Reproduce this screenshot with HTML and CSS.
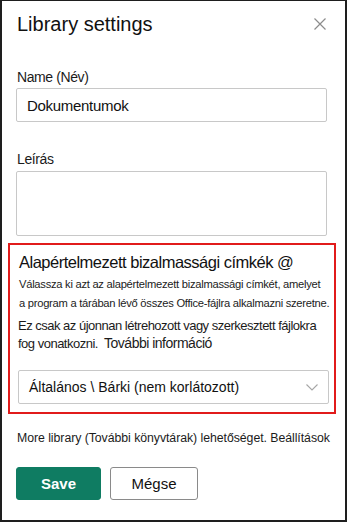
FILE: index.html
```html
<html>
  <head>
    <title>Library settings</title>
    <link rel="stylesheet" href="styles.css">
  </head>
  <body>
    <div class="panel">
      <div class="header">
        <h1>Library settings</h1>
        <button class="close" type="button" aria-label="Bezárás">
          <svg width="12" height="12" viewBox="0 0 12 12">
            <path d="M0.5 0.5 L11.5 11.5 M11.5 0.5 L0.5 11.5" stroke="#8c8c8c" stroke-width="1.2" fill="none" />
          </svg>
        </button>
      </div>

      <label class="field-label" for="name">Name (Név)</label>
      <input class="text-input" type="text" id="name" value="Dokumentumok" />

      <label class="field-label desc-label" for="desc">Leírás</label>
      <textarea class="text-area" id="desc"></textarea>

      <div class="highlight">
        <h2>Alapértelmezett bizalmassági címkék @</h2>
        <p class="small">Válassza ki azt az alapértelmezett bizalmassági címkét, amelyet<br>a program a tárában lévő összes Office-fájlra alkalmazni szeretne.</p>
        <p class="note">Ez csak az újonnan létrehozott vagy szerkesztett fájlokra<br>fog vonatkozni. <span class="more">További információ</span></p>
        <div class="dropdown">
          <span>Általános \ Bárki (nem korlátozott)</span>
          <svg width="12" height="7" viewBox="0 0 12 7">
            <path d="M0.5 0.5 L6 6 L11.5 0.5" stroke="#a6a6a6" stroke-width="1.1" fill="none" />
          </svg>
        </div>
      </div>

      <p class="footer-text">More library (További könyvtárak) lehetőséget. Beállítások</p>

      <div class="actions">
        <button class="btn primary" type="button">Save</button>
        <button class="btn" type="button">Mégse</button>
      </div>
    </div>
  </body>
</html>
```

FILE: styles.css
```css
html,
body {
  margin: 0;
  padding: 0;
  background: #fff;
}

body {
  font-family: "Liberation Sans", Arial, sans-serif;
  color: #1b1b1b;
}

.panel {
  box-sizing: border-box;
  width: 347px;
  height: 522px;
  border: 2px solid #1e1e1e;
  border-top-width: 1px;
  padding: 0 16px 0 14px;
  overflow: hidden;
}

.header {
  display: flex;
  justify-content: space-between;
  align-items: center;
  height: 24px;
  margin-top: 11px;
}

h1 {
  margin: 0 0 0 1px;
  font-size: 20px;
  line-height: 24px;
  font-weight: normal;
  color: #111;
}

.close {
  background: none;
  border: none;
  padding: 0;
  margin-right: 3px;
  width: 12px;
  height: 12px;
  display: flex;
}

.field-label {
  display: block;
  font-size: 14px;
  line-height: 18px;
  letter-spacing: -0.4px;
  margin: 32px 0 0 1px;
}

.desc-label {
  margin-top: 28px;
}

.text-input,
.text-area,
.dropdown {
  display: block;
  box-sizing: border-box;
  width: 311px;
  border: 1px solid #c8c8c8;
  border-radius: 2px;
  font-family: "Liberation Sans", Arial, sans-serif;
}

.text-input {
  height: 34px;
  margin-top: 2px;
  padding: 0 10px;
  font-size: 15px;
  letter-spacing: -0.3px;
  color: #111;
}

.text-area {
  height: 65px;
  margin-top: 3px;
  resize: none;
}

.highlight {
  box-sizing: border-box;
  width: 328px;
  margin: 7px 0 0 -8px;
  border: 2px solid #e11b1b;
  padding: 6px 4px 8px 8px;
}

h2 {
  margin: 0 0 0 1px;
  font-size: 16.5px;
  line-height: 22px;
  letter-spacing: -0.5px;
  font-weight: normal;
  color: #111;
}

.small {
  margin: 2px 0 0 1px;
  font-size: 11.2px;
  line-height: 18.5px;
  letter-spacing: -0.27px;
  white-space: nowrap;
}

.note {
  margin: 6px 0 0 0;
  font-size: 13px;
  line-height: 16.5px;
  letter-spacing: -0.5px;
  white-space: nowrap;
}

.more {
  font-size: 14px;
  letter-spacing: -0.5px;
  margin-left: 3px;
}

.dropdown {
  height: 34px;
  margin-top: 18px;
  padding: 0 10px 0 10px;
  display: flex;
  align-items: center;
  justify-content: space-between;
  font-size: 14px;
  letter-spacing: 0;
  color: #111;
}

.footer-text {
  margin: 15.5px 0 0 1px;
  font-size: 12.3px;
  line-height: 16px;
  letter-spacing: -0.05px;
  white-space: nowrap;
}

.actions {
  display: flex;
  gap: 9px;
  margin-top: 21.5px;
}

.btn {
  box-sizing: border-box;
  height: 33px;
  width: 88px;
  border: 1px solid #8a8a8a;
  border-radius: 3px;
  background: #fff;
  font-family: "Liberation Sans", Arial, sans-serif;
  font-size: 15px;
  color: #111;
}

.btn.primary {
  width: 85px;
  background: #0f7c62;
  border-color: #0f7c62;
  color: #fff;
  font-weight: bold;
}
```
